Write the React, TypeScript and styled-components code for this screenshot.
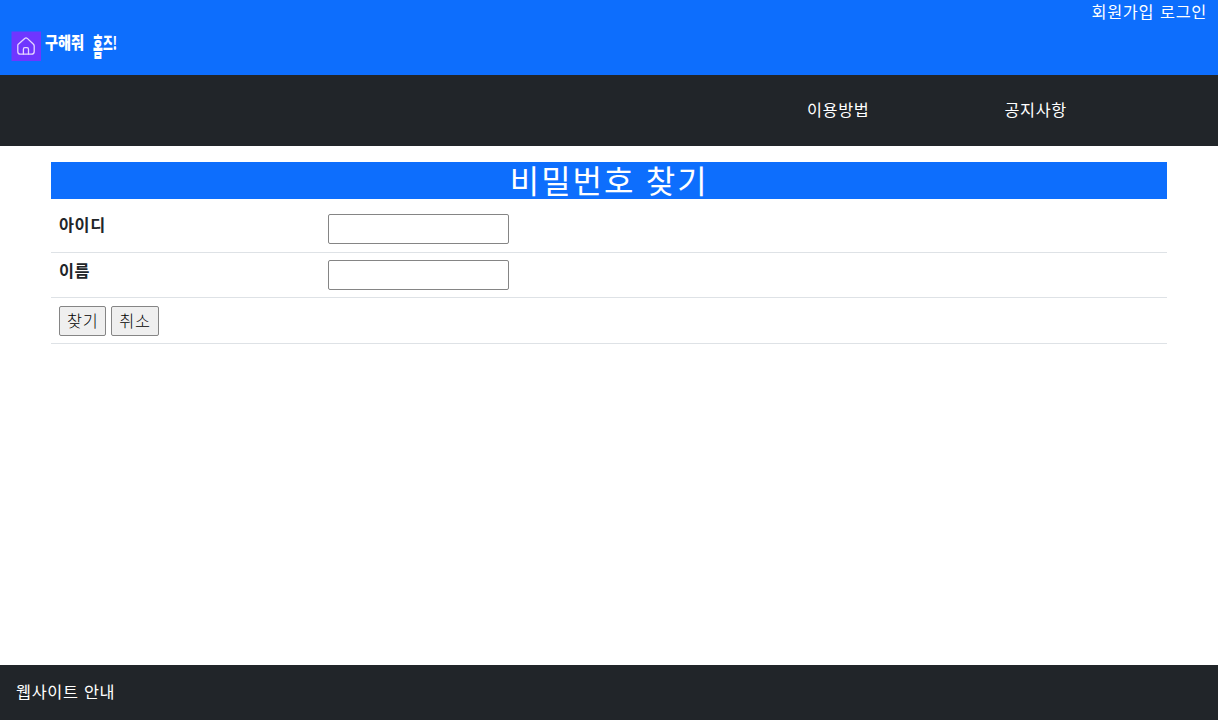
import React from 'react';
import styled, { createGlobalStyle } from 'styled-components';

const GlobalStyle = createGlobalStyle`
  *, *::before, *::after { box-sizing: border-box; }
  body {
    margin: 0;
    background: #fff;
    color: #212529;
    font-family: "Noto Sans CJK KR", sans-serif;
    font-size: 16.3px;
    line-height: 24px;
    letter-spacing: 0.65px;
    word-spacing: 1.1px;
  }
`;

const Page = styled.div`
  min-height: 100vh;
  display: flex;
  flex-direction: column;
`;

const Header = styled.header`
  height: 75px;
  padding: 0 11px;
  background: #0d6efd;
  color: #fff;
`;

const AccountLinks = styled.div`
  height: 31px;
  display: flex;
  justify-content: flex-end;
  gap: 6px;
  line-height: 22px;
`;

const PlainLink = styled.a`
  color: #fff;
  text-decoration: none;
`;

const Brand = styled.a`
  display: flex;
  align-items: flex-start;
  height: 30px;
  color: #fff;
`;

const BrandMark = styled.svg`
  display: block;
  width: 30px;
  height: 30px;
`;

const BrandName = styled.span`
  display: flex;
  margin-left: 4px;
  font-weight: 900;
  font-size: 17px;
  line-height: 22px;
  letter-spacing: 0;
`;

const BrandWord = styled.span<{ $width: number; $sx: number; $sy: number; $gap?: number }>`
  flex: none;
  width: ${p => p.$width}px;
  margin-left: ${p => p.$gap ?? 0}px;
  white-space: nowrap;
  transform: scale(${p => p.$sx}, ${p => p.$sy});
  transform-origin: 0 3px;
`;

const Nav = styled.nav`
  height: 71px;
  padding: 0 151px 3px 0;
  display: flex;
  justify-content: flex-end;
  align-items: center;
  gap: 135px;
  background: #212529;
`;

const Main = styled.main`
  flex: 1;
  padding: 15.5px 51px 0 51.4px;
`;

const Title = styled.h2`
  height: 37.5px;
  margin: 0 0 8px;
  background: #0d6efd;
  color: #fff;
  font-size: 32px;
  font-weight: 400;
  line-height: 34px;
  letter-spacing: 2px;
  text-align: center;
`;

const Row = styled.div`
  height: 45.7px;
  padding: 7.4px 7.6px;
  display: grid;
  grid-template-columns: 269px 1fr;
  align-items: start;
  border-bottom: 1px solid #dee2e6;
`;

const Label = styled.label`
  font-weight: 700;
  line-height: 21px;
`;

const Field = styled.input`
  width: 181px;
  height: 30px;
  border: 1px solid #858585;
  border-radius: 2px;
  background: #fff;
`;

const Actions = styled.div`
  display: flex;
  gap: 5px;
`;

const Button = styled.button`
  width: 47.3px;
  height: 30px;
  padding: 0 0 2px;
  border: 1px solid #858585;
  border-radius: 2px;
  background: #efefef;
  color: #000;
  font: inherit;
  font-weight: 300;
  letter-spacing: inherit;
`;

const Footer = styled.footer`
  height: 55px;
  padding: 14px 16px;
  background: #212529;
  color: #fff;
`;

export default function App() {
  return (
    <>
      <GlobalStyle />
      <Page>
        <Header>
          <AccountLinks>
            <PlainLink>회원가입</PlainLink>
            <PlainLink>로그인</PlainLink>
          </AccountLinks>
          <Brand>
            <BrandMark viewBox="0 0 30 30" fill="none" stroke="#e5d6ff" strokeWidth="1.3" strokeLinejoin="round" strokeLinecap="round">
              <rect x="0.5" y="0.5" width="29.5" height="29.5" fill="#6f36ff" stroke="none" />
              <path d="M7 13.5 13.7 7.4Q15 6.3 16.3 7.4L22.5 13.2Q23.2 14 23.2 15V20.5Q23.2 23.2 20.5 23.2H9.3Q6.8 23.2 6.8 20.5V14.8Q6.8 14 7 13.5Z" />
              <path d="M12.4 23V18.2Q12.4 16.6 13.8 16.6H16Q17.5 16.6 17.5 18.2V23" />
            </BrandMark>
            <BrandName>
              <BrandWord $width={40} $sx={0.83} $sy={1.02}>구해줘</BrandWord>
              <BrandWord $width={10} $sx={0.62} $sy={1.52} $gap={8}>홈</BrandWord>
              <BrandWord $width={14} $sx={0.62} $sy={1.05}>즈!</BrandWord>
            </BrandName>
          </Brand>
        </Header>
        <Nav>
          <PlainLink>이용방법</PlainLink>
          <PlainLink>공지사항</PlainLink>
        </Nav>
        <Main>
          <Title>비밀번호 찾기</Title>
          <Row>
            <Label htmlFor="userId">아이디</Label>
            <Field id="userId" />
          </Row>
          <Row>
            <Label htmlFor="userName">이름</Label>
            <Field id="userName" />
          </Row>
          <Row>
            <Actions>
              <Button>찾기</Button>
              <Button>취소</Button>
            </Actions>
          </Row>
        </Main>
        <Footer>웹사이트 안내</Footer>
      </Page>
    </>
  );
}
